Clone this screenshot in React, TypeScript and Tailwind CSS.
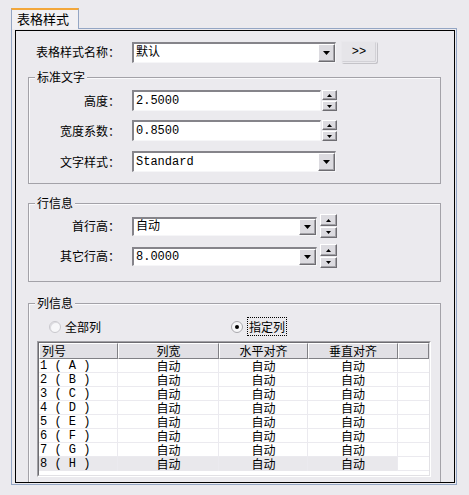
import React from 'react';

const cjk = { fontFamily: '"Noto Sans CJK SC", "Liberation Sans", sans-serif' };
const mono = { fontFamily: '"Liberation Mono", "Noto Sans CJK SC", monospace' };

function Tri({ size = 7 }: { size?: number }) {
  const h = Math.ceil(size / 2);
  return (
    <svg width={size} height={h} viewBox={`0 0 ${size} ${h}`}>
      <polygon points={`0,0 ${size},0 ${size / 2},${h}`} fill="#000" />
    </svg>
  );
}

function UpTri({ size = 5 }: { size?: number }) {
  const h = Math.ceil(size / 2);
  return (
    <svg width={size} height={h} viewBox={`0 0 ${size} ${h}`}>
      <polygon points={`0,${h} ${size},${h} ${size / 2},0`} fill="#000" />
    </svg>
  );
}

function RaisedBtn({ className, children }: { className: string; children?: React.ReactNode }) {
  return (
    <div
      className={
        'flex items-center justify-center bg-[#dcdbe0] border border-t-white border-l-white border-b-[#6e6d72] border-r-[#6e6d72] shadow-[inset_-1px_-1px_0_#a3a2a7] ' +
        className
      }
    >
      {children}
    </div>
  );
}

function Field({ w, h, text, combo }: { w: string; h: string; text: string; combo?: boolean }) {
  return (
    <div
      className={`${w} ${h} flex items-center bg-white border-t-2 border-l-2 border-b border-r border-t-[#85848a] border-l-[#85848a] border-b-[#f6f6f8] border-r-[#f6f6f8]`}
    >
      <span className="flex-1 pl-[2px] text-[12px] leading-[14px] text-black whitespace-nowrap" style={mono}>
        {text}
      </span>
      {combo && (
        <RaisedBtn className="w-[17px] h-full">
          <Tri />
        </RaisedBtn>
      )}
    </div>
  );
}

function Spin({ up, down }: { up: string; down: string }) {
  return (
    <div className="flex flex-col gap-px">
      <RaisedBtn className={`w-full ${up}`}>
        <UpTri />
      </RaisedBtn>
      <RaisedBtn className={`w-full ${down}`}>
        <Tri size={5} />
      </RaisedBtn>
    </div>
  );
}

function Label({ w, text }: { w: string; text: string }) {
  return (
    <div className={`${w} text-right text-[12px] text-black whitespace-nowrap`} style={cjk}>
      {text}
    </div>
  );
}

function Group({ title, className, children }: { title: string; className: string; children: React.ReactNode }) {
  return (
    <div
      className={
        'relative shrink-0 ml-[12px] w-[413px] border border-[#a3a2a8] shadow-[inset_1px_1px_0_#fafafc] ' + className
      }
    >
      <span
        className="absolute left-[6px] top-[-9px] px-[2px] bg-[#ebeaee] text-[12px] leading-[16px] text-black"
        style={cjk}
      >
        {title}
      </span>
      {children}
    </div>
  );
}

const cols = [
  { w: 'w-[79px]', label: '列号', left: true },
  { w: 'w-[101px]', label: '列宽' },
  { w: 'w-[89px]', label: '水平对齐' },
  { w: 'w-[90px]', label: '垂直对齐' },
];

const rows = ['1 ( A )', '2 ( B )', '3 ( C )', '4 ( D )', '5 ( E )', '6 ( F )', '7 ( G )', '8 ( H )'];

export default function App() {
  return (
    <div className="w-[469px] h-[495px] bg-[#ebeaee] pl-[11px] pt-[8px] overflow-hidden">
      <div
        className="relative z-10 w-[68px] h-[21px] -mb-px bg-[#f1f0f3] border-t-2 border-t-[#f3a73a] border-x border-x-[#94a6c4] pl-[5px] text-[13px] leading-[18px] text-black"
        style={cjk}
      >
        表格样式
      </div>
      <div className="w-[446px] h-[457px] border border-[#94a6c4] pl-[3px] pt-px">
        <div className="w-[440px] h-[453px] border border-black overflow-hidden flex flex-col">
          <div className="shrink-0 mt-[10px] flex items-center">
            <Label w="w-[104px]" text="表格样式名称：" />
            <div className="ml-[12px]">
              <Field w="w-[204px]" h="h-[21px]" text="默认" combo />
            </div>
            <div className="ml-[5px] w-[36px] h-[22px] flex items-center justify-center rounded-[2px] bg-[#e6e5e9] border border-[#e9e8ec] shadow-[1px_1px_0_#c4c3c8,inset_-1px_-1px_0_#d2d1d6]">
              <span className="text-[12px] text-black" style={mono}>&gt;&gt;</span>
            </div>
          </div>

          <Group title="标准文字" className="mt-[14px] h-[107px] pt-[12px]">
            <div className="flex items-center">
              <Label w="w-[91px]" text="高度：" />
              <div className="ml-[12px] flex">
                <Field w="w-[189px]" h="h-[21px]" text="2.5000" />
                <div className="w-[15px] ml-px">
                  <Spin up="h-[10px]" down="h-[10px]" />
                </div>
              </div>
            </div>
            <div className="mt-[9px] flex items-center">
              <Label w="w-[91px]" text="宽度系数：" />
              <div className="ml-[12px] flex">
                <Field w="w-[189px]" h="h-[21px]" text="0.8500" />
                <div className="w-[15px] ml-px">
                  <Spin up="h-[10px]" down="h-[10px]" />
                </div>
              </div>
            </div>
            <div className="mt-[10px] flex items-center">
              <Label w="w-[91px]" text="文字样式：" />
              <div className="ml-[12px]">
                <Field w="w-[204px]" h="h-[21px]" text="Standard" combo />
              </div>
            </div>
          </Group>

          <Group title="行信息" className="mt-[19px] h-[79px] pt-[10px]">
            <div className="flex items-center">
              <Label w="w-[91px]" text="首行高：" />
              <div className="ml-[12px] flex items-center">
                <Field w="w-[185px]" h="h-[19px]" text="自动" combo />
                <div className="w-[17px] ml-[3px]">
                  <Spin up="h-[12px]" down="h-[11px]" />
                </div>
              </div>
            </div>
            <div className="mt-[6px] flex items-center">
              <Label w="w-[91px]" text="其它行高：" />
              <div className="ml-[12px] flex items-center">
                <Field w="w-[185px]" h="h-[19px]" text="8.0000" combo />
                <div className="w-[17px] ml-[3px]">
                  <Spin up="h-[12px]" down="h-[11px]" />
                </div>
              </div>
            </div>
          </Group>

          <Group title="列信息" className="mt-[21px] h-[190px] pt-[13px]">
            <div className="flex items-center h-[19px]">
              <div className="ml-[20px] w-[182px] flex items-center">
                <div className="w-[12px] h-[12px] rounded-full border border-[#c9c8cd] bg-[#f7f7f9] shadow-[inset_1px_1px_0_#dcdbe0]" />
                <span className="ml-[4px] text-[12px] text-black" style={cjk}>全部列</span>
              </div>
              <div className="flex items-center">
                <div className="w-[12px] h-[12px] rounded-full border border-[#a9a8ad] bg-[#f7f7f9] flex items-center justify-center">
                  <div className="w-[4px] h-[4px] rounded-full bg-black" />
                </div>
                <span
                  className="ml-[4px] px-px h-[19px] leading-[17px] border border-dotted border-black text-[12px] text-black"
                  style={cjk}
                >
                  指定列
                </span>
              </div>
            </div>

            <div className="mt-[5px] ml-[8px] w-[394px] h-[136px] border border-t-[#a09fa4] border-l-[#a09fa4] border-b-white border-r-white bg-white">
              <div className="h-full w-full border border-t-[#6d6c71] border-l-[#6d6c71] border-b-[#e2e1e5] border-r-[#e2e1e5] flex flex-col">
                <div className="flex h-[16px] shrink-0">
                  {cols.map((c) => (
                    <div
                      key={c.label}
                      className={`${c.w} h-full bg-[#e1e0e5] border border-t-white border-l-white border-b-[#808085] border-r-[#808085] text-[12px] leading-[14px] text-black ${c.left ? 'pl-[2px]' : 'text-center'}`}
                      style={cjk}
                    >
                      {c.label}
                    </div>
                  ))}
                  <div className="flex-1 h-full bg-[#e1e0e5] border border-t-white border-l-white border-b-[#808085] border-r-[#808085]" />
                </div>
                {rows.map((r, i) => (
                  <div key={r} className="flex h-[14px] shrink-0 shadow-[inset_0_-1px_0_#ebeaef]">
                    <div
                      className={`w-[79px] pl-[1px] text-[12px] leading-[14px] text-black whitespace-pre shadow-[inset_-1px_0_0_#ebeaef] ${i === 7 ? 'bg-[#e9e8ec]' : ''}`}
                      style={mono}
                    >
                      {r}
                    </div>
                    {[1, 2, 3].map((k) => (
                      <div
                        key={k}
                        className={`${cols[k].w} text-center text-[12px] leading-[14px] text-black shadow-[inset_-1px_0_0_#ebeaef] ${i === 7 ? 'bg-[#e9e8ec]' : ''}`}
                        style={cjk}
                      >
                        自动
                      </div>
                    ))}
                    <div className="flex-1" />
                  </div>
                ))}
              </div>
            </div>
          </Group>
        </div>
      </div>
    </div>
  );
}
